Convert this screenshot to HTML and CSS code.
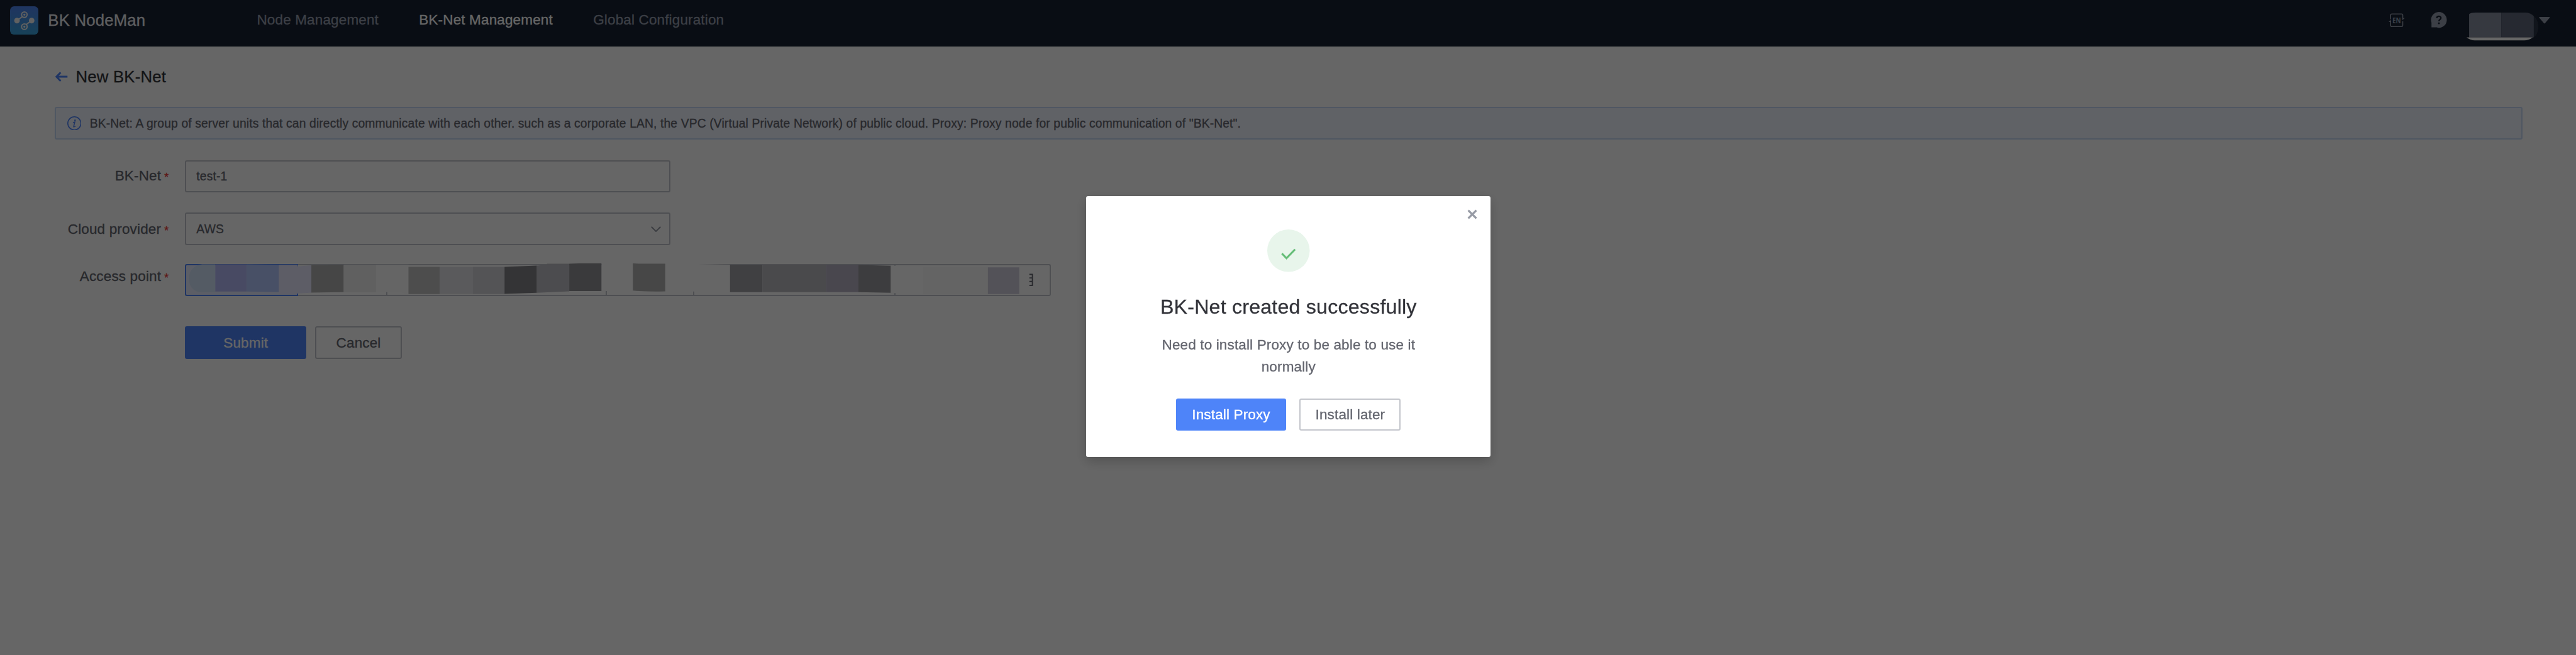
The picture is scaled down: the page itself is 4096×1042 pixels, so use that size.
FILE: index.html
```html
<!DOCTYPE html>
<html lang="en">
<head>
<meta charset="utf-8">
<title>BK NodeMan</title>
<link rel="stylesheet" href="styles.css">
</head>
<body>
<header class="topbar">
  <svg class="logo" viewBox="0 0 56 56">
    <defs><linearGradient id="lg" x1="0" y1="0" x2="0" y2="1"><stop offset="0" stop-color="#4f83f0"/><stop offset="1" stop-color="#3aa4dc"/></linearGradient></defs>
    <rect width="56" height="56" rx="8" fill="url(#lg)"/>
    <g stroke="#f2f2f2" stroke-width="2.4" fill="none">
      <path d="M13.5 28.3 25 20M42.7 28.3 31.5 36.500"/>
      <circle cx="28.300" cy="16.600" r="5.500"/><circle cx="28.300" cy="40.300" r="5.500"/>
    </g>
    <g fill="#f2f2f2"><circle cx="13.700" cy="28.300" r="5.500"/><circle cx="42.700" cy="28.300" r="5.500"/><circle cx="28.300" cy="16.600" r="2"/><circle cx="28.300" cy="40.300" r="2"/></g>
  </svg>
  <span class="brand">BK NodeMan</span>
  <nav class="nav">
    <a class="nav-item">Node Management</a>
    <a class="nav-item nav-active">BK-Net Management</a>
    <a class="nav-item">Global Configuration</a>
  </nav>
  <div class="tools">
    <svg class="icon-lang" viewBox="0 0 32 28">
      <path d="M4 12V4q0-2.500 2.500-2.500h19q2.500 0 2.500 2.500v6M28 16v8q0 2.500-2.500 2.500H6.500Q4 26.500 4 24v-8" fill="none" stroke="currentColor" stroke-width="2"/>
      <path d="M0 17.500 5 13v4.500zM32 9.500 27 14V9.500z" fill="currentColor"/>
      <text class="lang-text" x="16" y="19.300" text-anchor="middle" textLength="17" lengthAdjust="spacingAndGlyphs">EN</text>
    </svg>
    <svg class="icon-help" viewBox="0 0 32 32">
      <path d="M16 0a15.700 15.700 0 1 1 0 31.500q-2 0-4-1H1.500V21A15.700 15.700 0 0 1 16 0z" fill="currentColor"/>
      <path d="M12 12.500c0-5.300 8.200-4.800 8.200-.6 0 2.900-3.900 3-3.900 6.400" fill="none" stroke="#182132" stroke-width="2.900"/>
      <circle cx="16.200" cy="22.400" r="1.900" fill="#182132"/>
    </svg>
    <svg class="user" viewBox="0 0 142 56">
      <path d="M5 3Q9 0 18 0H69V49H5z" fill="#878fa0"/>
      <path d="M69 0h47q10 0 17 7v42H69z" fill="#5f677b"/>
      <path d="M133 7q9 8 9 20 0 15-9 22z" fill="#2b3546"/>
      <path d="M0 49h131q-8 6-17 6H16Q8 55 0 49z" fill="#fff"/>
    </svg>
    <svg class="caret" viewBox="0 0 22 14"><path d="M1.500 0h19q2 0 .8 1.500L12 12.500q-1 1-2 0L.7 1.500Q-.5 0 1.500 0z" fill="currentColor"/></svg>
  </div>
</header>

<main class="page">
  <div class="page-title">
    <svg class="back" viewBox="0 0 25 20"><path d="M24 10H3M10.500 1.500 2.300 10l8.200 8.500" fill="none" stroke="#4e84f9" stroke-width="3.600"/></svg>
    <h1>New BK-Net</h1>
  </div>
  <div class="tip">
    <svg class="info" viewBox="0 0 28 28"><circle cx="14" cy="14" r="13" fill="none" stroke="#4e84f9" stroke-width="2"/><circle cx="15.300" cy="7.700" r="1.500" fill="#4e84f9"/><path d="M11.200 12.500q2.500-1 3.800-1.500l-2.500 9.500q0 1.500 3.800-1" fill="none" stroke="#4e84f9" stroke-width="1.800"/></svg>
    <span class="tip-text">BK-Net: A group of server units that can directly communicate with each other. such as a corporate LAN, the VPC (Virtual Private Network) of public cloud. Proxy: Proxy node for public communication of "BK-Net".</span>
  </div>
  <form class="form">
    <div class="row">
      <label class="label">BK-Net<span class="star">*</span></label>
      <div class="field">test-1</div>
    </div>
    <div class="row row-provider">
      <label class="label label-low">Cloud provider<span class="star">*</span></label>
      <div class="field">AWS
        <svg class="chevron" viewBox="0 0 20 12"><path d="M1 1l9 9 9-9" fill="none" stroke="#979ba5" stroke-width="2.400"/></svg>
      </div>
    </div>
    <div class="row row-access">
      <label class="label label-high">Access point<span class="star">*</span></label>
      <div class="segments">
        <span class="seg seg-on"></span><span class="seg seg-b"></span><span class="seg seg-c"></span><span class="seg seg-d"></span><span class="seg seg-e"></span><span class="seg seg-f"></span>
        <svg class="mosaic" viewBox="366 520 1712 66">
          <path d="M426 523h-26q-26 4-26 28 0 22 20 27h32z" fill="#d2e4fa"/>
          <path d="M426 523h62v54h-62z" fill="#b4b9f8"/>
          <path d="M488 523l64 1v54l-64-1z" fill="#b4c8ff"/>
          <path d="M552 524h37v3l27-2v54l-27 2h-37z" fill="#e9e9ff"/>
          <path d="M616 525l64-1v54l-64 1z" fill="#afafaf"/>
          <path d="M680 524h64v54h-64z" fill="#f0f0f0"/>
          <path d="M744 524h64v58l-18-4h-46z" fill="#fcfcfc"/>
          <path d="M808 528h62v54h-62z" fill="#c1c1c1"/>
          <path d="M870 528h65v54h-65z" fill="#e1e1e6"/>
          <path d="M935 528h63v54h-63z" fill="#d2d2d7"/>
          <path d="M998 528l64-2.500v54l-64 2z" fill="#828287"/>
          <path d="M1062 525.500l20-1.500V522h44v54.500l-64 3z" fill="#bebec5"/>
          <path d="M1126 522l20-.7h44V576h-64z" fill="#919196"/>
          <path d="M1190 520h62v56h-62z" fill="#fff"/>
          <path d="M1252 521.300l12 .7h52v54.500q-32 1.200-64-1.500z" fill="#b1b1b1"/>
          <path d="M1316 520h40v2l88 2v54l-128-2z" fill="#fff"/>
          <path d="M1444 524h64v54h-64z" fill="#a0a0a5"/>
          <path d="M1508 524h126v54h-126z" fill="#b9b9be"/>
          <path d="M1634 524h64v54h-64z" fill="#b6b2c3"/>
          <path d="M1698 524.500l64 1.500v53.500l-64-1.500z" fill="#98989d"/>
          <path d="M1762 526h64v54h-64z" fill="#fff"/>
          <path d="M1826 528h128v54h-128z" fill="#fbfbfb"/>
          <path d="M1954 529h62v53h-62z" fill="#cfcddc"/>
          <path d="M2036 543h6v22h-6M2036 550h5M2036 557h5" fill="none" stroke="#63656e" stroke-width="2.200"/>
        </svg>
      </div>
    </div>
    <div class="actions">
      <button type="button" class="btn btn-primary btn-submit">Submit</button>
      <button type="button" class="btn btn-cancel">Cancel</button>
    </div>
  </form>
</main>

<div class="mask">
  <section class="dialog">
    <svg class="close" viewBox="0 0 20 20"><path d="M2 2l16 16M18 2 2 18" stroke="#979ba5" stroke-width="4"/></svg>
    <svg class="success" viewBox="0 0 84 84"><circle cx="42" cy="42" r="42" fill="#e8f5eb"/><path d="M29 47.500l9 9.500L55 39.500" fill="none" stroke="#65bd77" stroke-width="3.800"/></svg>
    <h2 class="dialog-title">BK-Net created successfully</h2>
    <p class="dialog-text">Need to install Proxy to be able to use it normally</p>
    <div class="dialog-actions">
      <button type="button" class="btn btn-primary btn-install">Install Proxy</button>
      <button type="button" class="btn btn-later">Install later</button>
    </div>
  </section>
</div>
</body>
</html>
```
FILE: styles.css
```css
/* 1rem = 100 design pixels */
html { font-size: 80.408px; }
* { box-sizing: border-box; }
body {
  margin: 0;
  height: 100vh;
  overflow: hidden;
  background: #fff;
  color: #63656e;
  font-family: "Liberation Sans", Arial, sans-serif;
  font-size: .28rem;
  -webkit-text-stroke: .3px currentColor;
}
svg { display: block; flex: none; -webkit-text-stroke: 0; }
h1, h2, p { margin: 0; font-weight: 400; }

.topbar {
  display: flex;
  align-items: center;
  height: .92rem;
  padding: 0 .51rem .12rem .2rem;
  background: #182132;
  color: #979fae;
  white-space: nowrap;
}
.logo { width: .56rem; height: .56rem; }
.brand { width: 3.91rem; margin-left: .19rem; font-size: .32rem; line-height: .36rem; letter-spacing: .0025rem; color: #eaebf0; }
.nav { display: flex; gap: .8rem; margin-left: .22rem; line-height: .32rem; letter-spacing: .0018rem; }
.nav-active { color: #fff; }
.tools { display: flex; align-items: flex-start; height: .56rem; margin-left: auto; }
.icon-lang { width: .32rem; height: .28rem; margin-top: .14rem; }
.lang-text { font: bold 15px "Noto Sans", sans-serif; fill: currentColor; }
.icon-help { width: .32rem; height: .32rem; margin: .12rem 0 0 .51rem; }
.user { width: 1.42rem; height: .56rem; margin: .13rem 0 0 .385rem; }
.caret { width: .22rem; height: .14rem; margin: .22rem 0 0 .02rem; }

.page { padding: .38rem 1.06rem 0 1.08rem; }
.page-title { display: flex; align-items: center; height: .44rem; }
.page-title h1 { margin-left: .16rem; font-size: .32rem; letter-spacing: .0025rem; color: #313238; }
.back { width: .25rem; height: .2rem; margin-left: .01rem; }
.tip {
  display: flex;
  align-items: center;
  height: .64rem;
  margin-top: .38rem;
  padding-left: .22rem;
  border: 2px solid #c5daf5;
  border-radius: .04rem;
  background: #f0f4ff;
  font-size: .24rem;
  letter-spacing: .00162rem;
  white-space: nowrap;
}
.info { width: .28rem; height: .28rem; }
.tip-text { margin-left: .17rem; padding-top: .02rem; }

.form { padding-top: .41rem; letter-spacing: .0018rem; }
.row { display: flex; height: .64rem; }
.row-provider { margin-top: .4rem; }
.row-access { margin-top: .37rem; }
.label {
  display: flex;
  justify-content: flex-end;
  align-items: center;
  width: 2.58rem;
  height: .62rem;
  padding-right: .33rem;
}
.label-high { height: .5rem; }
.label-low { height: .66rem; }
.star { width: .08rem; margin: .06rem 0 0 .065rem; font-size: .22rem; line-height: .2rem; color: #ea3636; }
.field {
  display: flex;
  align-items: center;
  justify-content: space-between;
  width: 9.6rem;
  padding: .01rem .16rem 0 .2rem;
  border: 2px solid #c4c6cc;
  border-radius: .04rem;
  font-size: .24rem;
}
.chevron { width: .2rem; height: .12rem; }
.segments { position: relative; display: flex; width: 17.12rem; }
.seg { border: solid #c4c6cc; border-width: 2px 2px 2px 0; }
.seg-on { width: 2.24rem; border: 2px solid #4e84f9; border-radius: .04rem 0 0 .04rem; background: #e7ebff; }
.seg-b { width: 1.76rem; }
.seg-c { width: 4.34rem; }
.seg-d { width: 1.73rem; }
.seg-e { width: 3.98rem; }
.seg-f { flex: 1; border-radius: 0 .04rem .04rem 0; }
.mosaic { position: absolute; left: 0; bottom: 0; width: 17.12rem; height: .66rem; }

.actions { display: flex; gap: .17rem; margin: .6rem 0 0 2.58rem; }
.btn {
  height: .64rem;
  padding: .015rem 0 0;
  border: 2px solid #c4c6cc;
  border-radius: .04rem;
  background: #fff;
  color: #63656e;
  font: .28rem "Liberation Sans", Arial, sans-serif;
  letter-spacing: .0018rem;
}
.btn-primary { border-color: #4e84f9; background: #4e84f9; color: #fff; }
.btn-submit { width: 2.4rem; }
.btn-cancel { width: 1.72rem; }

.mask {
  position: fixed;
  inset: 0;
  display: flex;
  justify-content: center;
  align-items: flex-start;
  padding: 3.88rem 0 0 .02rem;
  background: rgba(0, 0, 0, .6);
}
.dialog {
  position: relative;
  display: flex;
  flex-direction: column;
  align-items: center;
  width: 8rem;
  height: 5.16rem;
  padding-top: .66rem;
  border-radius: .04rem;
  background: #fff;
  box-shadow: 0 .08rem .24rem rgba(0, 0, 0, .2);
  letter-spacing: .0018rem;
}
.close { position: absolute; top: .26rem; right: .26rem; width: .2rem; height: .2rem; }
.success { width: .84rem; height: .84rem; }
.dialog-title { margin-top: .435rem; font-size: .4rem; line-height: .52rem; letter-spacing: .0026rem; color: #313238; }
.dialog-text { width: 5.2rem; margin-top: .27rem; line-height: .44rem; text-align: center; }
.dialog-actions { display: flex; gap: .27rem; margin-top: .395rem; }
.btn-install { width: 2.17rem; }
.btn-later { width: 2rem; }
```
